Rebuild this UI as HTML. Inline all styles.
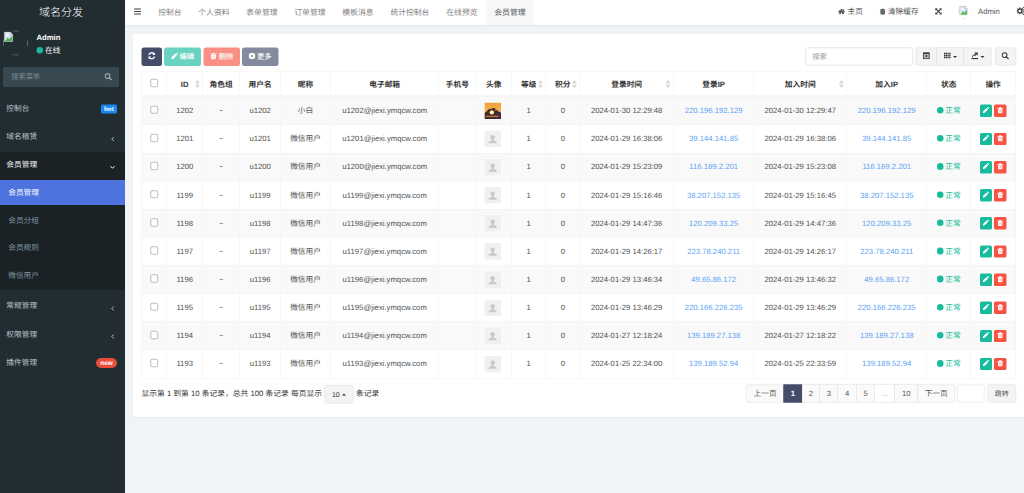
<!DOCTYPE html><html><head><meta charset="utf-8"><title>域名分发</title><style>
*{box-sizing:border-box;margin:0;padding:0}
html,body{width:1024px;height:493px;overflow:hidden;background:#f1f4f6}
body{font-family:"Liberation Sans","Noto Sans CJK SC",sans-serif;color:#333}
#app{text-rendering:geometricPrecision;position:absolute;left:0;top:0;width:2048px;height:986px;transform:scale(.5);transform-origin:0 0;font-size:15.4px;line-height:1.42857;overflow:hidden;background:#f1f4f6}
svg.ic{width:1em;height:1em;vertical-align:-.125em;display:inline-block}
.side{position:absolute;left:0;top:0;width:250px;height:986px;background:#222d32;color:#b8c7ce}
.logo{position:absolute;left:0;top:0;width:250px;height:50px;line-height:50px;text-align:center;color:#fff;font-size:22px;font-weight:300;padding-right:6px}
.uimg{position:absolute;left:6px;top:61px;width:50px;height:50px}
.uimg .ring{position:absolute;left:0;top:0;width:50px;height:50px}
.uimg .brk{position:absolute;left:1px;top:2px;width:20px;height:21px}
.uname{position:absolute;left:73px;top:64px;font-weight:bold;color:#fff;font-size:15.4px;line-height:22px}
.ustat{position:absolute;left:73px;top:91px;color:#fff;font-size:15.4px;line-height:22px}
.ustat i{display:inline-block;width:13px;height:13px;border-radius:50%;background:#18bc9c;margin-right:4px;vertical-align:-1px}
.sform{position:absolute;left:6px;top:134px;width:232px;height:40px;background:#374850;border-radius:4px;color:#7b8d96;font-size:14.4px;line-height:39px;padding-left:16.500px}
.sform svg{position:absolute;right:14px;top:12px;width:15px;height:15px;color:#a9b4ba}
.dark{position:absolute;left:0;top:304px;width:250px;height:276px;background:#1a2226}
.blue{position:absolute;left:0;top:359.600px;width:250px;height:50.200px;background:#4e73df}
.mi{position:absolute;left:12.600px;height:30px;line-height:30px;font-size:15.4px;color:#b8c7ce;white-space:nowrap}
.mi.s{left:16.400px;color:#7f97a2}
.mi.w{color:#fff}
.chev{position:absolute;left:221.500px;width:7px;height:10px}
.badge{position:absolute;height:17.500px;line-height:17px;font-size:12.500px;font-weight:bold;color:#fff;border-radius:3px;background:#1688f1;text-align:center}
.badge.new{background:#e74c3c;border-radius:10px;height:20px;line-height:18.500px;font-size:13px}
.head{position:absolute;left:250px;top:0;width:1798px;height:50px;background:#fff;box-shadow:0 2px 4px rgba(0,0,0,.06)}
.burger{position:absolute;left:18px;top:17px;width:14px;height:13px}
.burger i{display:block;height:2.400px;background:#3c3c3c;margin-bottom:2.600px;border-radius:1px}
.tabs{position:absolute;left:49.800px;top:0;height:50px;display:flex}
.tabs span{display:block;height:50px;line-height:49.600px;text-align:center;color:#828282;font-size:15.6px}
.tabs span.on{background:#f7f7f7;color:#555}
.rnav{position:absolute;top:0;height:50px;line-height:47px;color:#555;font-size:15.4px;white-space:nowrap}
.rnav svg.ic{color:#444}
.panel{position:absolute;left:266px;top:67.600px;width:1800px;height:766.400px;background:#fff;border-radius:4px;box-shadow:0 1px 2px rgba(0,0,0,.05)}
.btn{position:absolute;top:94.600px;height:37.200px;line-height:36.400px;border-radius:5px;color:#fff;font-size:14.600px;font-weight:500;text-align:center;white-space:nowrap}
.btn svg.ic{width:14px;height:14px;vertical-align:-2.600px;margin-right:3px}
.sinput{position:absolute;left:1611px;top:94.800px;width:215px;height:36px;border:1px solid #c9cde4;border-radius:4px;background:#fff;color:#999;font-size:14.400px;line-height:34px;padding-left:12.500px}
.tb{position:absolute;top:94.800px;height:36px;background:#f4f4f4;border:1px solid #ddd;color:#333;text-align:center;line-height:33px;font-size:15px}
.tb svg.ic{width:15px;height:15px;vertical-align:-2px}
.caret{display:inline-block;width:0;height:0;border-left:4px solid transparent;border-right:4px solid transparent;border-top:4.500px solid #333;vertical-align:1px;margin-left:4px}
table{position:absolute;left:283px;top:142.500px;border-collapse:separate;border-spacing:0;table-layout:fixed;width:1748.600px;font-size:15.4px}
th,td{border-top:1px solid #f1f1f1;border-left:1px solid #f1f1f1;text-align:center;vertical-align:middle;padding:0;white-space:nowrap;overflow:hidden;position:relative;color:#505050}
th{height:50.600px;border-bottom:2px solid #f0f0f0;font-weight:bold;color:#333;padding-top:4.600px}
td{height:56.280px}
tr>*:last-child{border-right:1px solid #f1f1f1}
tbody tr:last-child td{border-bottom:1px solid #f1f1f1;height:57.280px}
tbody tr:nth-child(odd) td{background:#f9f9f9}
a{color:#5b9ff5;text-decoration:none}
.cb{display:inline-block;width:15.600px;height:15.600px;border:1.200px solid #7d7d7d;border-radius:3px;background:#fff;vertical-align:middle;position:relative;top:-2px}
.sort{position:absolute;right:5.400px;top:50%;margin-top:-7px;width:9.700px;height:16.600px}
.av{width:33px;height:33.200px;display:block;margin:0 auto;position:relative;left:-1.600px}
.cj{position:relative;top:0}
th .cb{top:-3.600px}
.da{display:inline-block;transform:scale(1.7,1.2);color:#777}
.st{color:#18bc9c}
.st i{display:inline-block;width:13.400px;height:13.400px;border-radius:50%;background:#18bc9c;margin-right:3.400px;vertical-align:-1.500px}
.ab{display:inline-block;width:24.400px;height:24.600px;border-radius:3px;color:#fff;vertical-align:middle;line-height:23px}
.ab svg.ic{width:13px;height:13px;vertical-align:-1.500px}
.pinfo{position:absolute;top:770px;height:37px;line-height:36px;font-size:15.500px;color:#333;white-space:nowrap}
.psize{position:absolute;left:649.200px;top:770px;width:58px;height:37px;border:1px solid #ddd;border-radius:4px;background:#f4f4f4;text-align:center;line-height:34px;font-size:14px;color:#333}
.psize b{display:inline-block;width:0;height:0;border-left:4px solid transparent;border-right:4px solid transparent;border-bottom:4.500px solid #333;vertical-align:2px;margin-left:5px}
.pg{position:absolute;top:768.600px;height:36.600px;border:1px solid #ddd;margin-left:-1px;background:#fafafa;color:#555;text-align:center;line-height:34px;font-size:15.4px}
.pg.on{background:#444c69;border-color:#444c69;color:#fff;font-weight:bold}
.pg.dis{background:#fff;color:#aaa}
</style></head><body><div id="app">
<div class="side"><div class="logo">域名分发</div>
<div class="uimg"><svg class="ring" viewBox="0 0 50 50"><circle cx="25" cy="25" r="24.300" fill="none" stroke="#b4bcc0" stroke-opacity=".75" stroke-width="1.300" stroke-dasharray="12 26.170" stroke-dashoffset="6"/></svg><svg viewBox="0 0 18 19" class="brk"><path d="M1.500 1h10.500l4.500 4.500V18h-15z" fill="#fff" stroke="#a9b1bb" stroke-width="1.200"/><path d="M2.500 2h9l4 4v7h-13z" fill="#cfe0f7"/><ellipse cx="7" cy="6.500" rx="3.500" ry="2" fill="#fff"/><path d="M12 1v4.500h4.500" fill="#e8edf3" stroke="#a9b1bb" stroke-width="1.200"/><path d="M2.500 17l5-5.500 3 2.500 5-6V17z" fill="#4cae3c"/></svg></div><div class="uname">Admin</div><div class="ustat"><i></i>在线</div>
<div class="sform">搜索菜单<svg class="ic" viewBox="0 0 16 16"><circle cx="6.600" cy="6.600" r="5" fill="none" stroke="currentColor" stroke-width="2.200"/><path d="M10.400 10.400l4.300 4.300" stroke="currentColor" stroke-width="2.600" stroke-linecap="round"/></svg></div>
<div class="dark"></div><div class="blue"></div>
<div class="mi " style="top:202.6px">控制台</div>
<span class="badge" style="left:202px;width:31.500px;top:209px">hot</span>
<div class="mi " style="top:259.2px">域名租赁</div><svg class="chev" style="top:273.0px" viewBox="0 0 7 10"><path d="M5.500 1L1.500 5l4 4" fill="none" stroke="#b8c7ce" stroke-width="1.900"/></svg>
<div class="mi w" style="top:315.2px">会员管理</div><svg class="chev" style="top:331.0px;left:220px;width:10px;height:7px" viewBox="0 0 10 7"><path d="M1 1.500l4 4 4-4" fill="none" stroke="#fff" stroke-width="2"/></svg>
<div class="mi s w" style="top:370.9px">会员管理</div><div class="mi s" style="top:426.2px">会员分组</div><div class="mi s" style="top:481.4px">会员规则</div><div class="mi s" style="top:536.6px">微信用户</div>
<div class="mi " style="top:597.2px">常规管理</div><svg class="chev" style="top:611.6px" viewBox="0 0 7 10"><path d="M5.500 1L1.500 5l4 4" fill="none" stroke="#b8c7ce" stroke-width="1.900"/></svg>
<div class="mi " style="top:653.8px">权限管理</div><svg class="chev" style="top:668.2px" viewBox="0 0 7 10"><path d="M5.500 1L1.500 5l4 4" fill="none" stroke="#b8c7ce" stroke-width="1.900"/></svg>
<div class="mi " style="top:710.4px">插件管理</div>
<span class="badge new" style="left:192.400px;width:41.200px;top:716.200px">new</span>
</div>
<div class="head"><div class="burger"><i></i><i></i><i></i></div><div class="tabs">
<span style="width:80px">控制台</span>
<span style="width:96px">个人资料</span>
<span style="width:96px">表单管理</span>
<span style="width:96px">订单管理</span>
<span style="width:96px">模板消息</span>
<span style="width:112px">统计控制台</span>
<span style="width:96px">在线预览</span>
<span style="width:96px" class="on">会员管理</span>
</div>
<div class="rnav" style="left:1426px"><svg class="ic" style="width:14px;height:12px;vertical-align:-0.5px" viewBox="0 0 16 14"><path d="M8 .6L.2 7.200l1.100 1.300L8 2.900l6.700 5.600 1.100-1.300-2.600-2.200V1.400h-2v1.900zM2.600 8.400L8 3.900l5.400 4.500v5H9.500V9.600h-3v3.800H2.600z" fill="currentColor"/></svg><span style="margin-left:5px">主页</span></div>
<div class="rnav" style="left:1508.600px"><svg class="ic" style="width:12.6px;height:14px;vertical-align:-1.5px" viewBox="0 0 16 16"><path d="M1 2.800h4l.7-2h4.600l.7 2h4v2H1zM2.200 5.600h11.600l-.7 9.200a1.200 1.200 0 0 1-1.200 1.100H4.100a1.200 1.200 0 0 1-1.200-1.100zM5.600 7.600v5.800h.6V7.600zm2.100 0v5.800h.6V7.600zm2.100 0v5.800h.6V7.600z" fill="currentColor" fill-rule="evenodd"/></svg><span style="margin-left:4.500px">清除缓存</span></div>
<div class="rnav" style="left:1620px"><svg class="ic" style="width:13.6px;height:13.6px;vertical-align:-1.5px" viewBox="0 0 16 16"><path d="M.5.500h5.800L4.400 2.400 8 6l3.600-3.600L9.700.5h5.800v5.800l-1.900-1.900L10 8l3.600 3.600 1.900-1.900v5.800H9.700l1.900-1.900L8 10l-3.600 3.600 1.900 1.900H.5V9.700l1.900 1.900L6 8 2.400 4.400.5 6.300z" fill="currentColor"/></svg></div>
<svg style="position:absolute;left:1666.400px;top:11px;width:27px;height:27px" viewBox="0 0 27 27"><circle cx="13.500" cy="13.500" r="13" fill="none" stroke="#b5b5b5" stroke-opacity=".7" stroke-width="1" stroke-dasharray="7 13.420" stroke-dashoffset="3.500"/></svg>
<svg viewBox="0 0 18 19" style="position:absolute;left:1668px;top:11.500px;width:18px;height:19px"><path d="M1.500 1h10.500l4.500 4.500V18h-15z" fill="#fff" stroke="#a9b1bb" stroke-width="1.200"/><path d="M2.500 2h9l4 4v7h-13z" fill="#cfe0f7"/><ellipse cx="7" cy="6.500" rx="3.500" ry="2" fill="#fff"/><path d="M12 1v4.500h4.500" fill="#e8edf3" stroke="#a9b1bb" stroke-width="1.200"/><path d="M2.500 17l5-5.500 3 2.500 5-6V17z" fill="#4cae3c"/></svg>
<div class="rnav" style="left:1706px">Admin</div>
<div class="rnav" style="left:1783px"><svg class="ic" style="width:18px;height:18px;vertical-align:-3px" viewBox="0 0 16 16"><path d="M5.500 1.200l1.300.2.400 1.500 1.200.7 1.400-.6.900 1-.7 1.400.4 1.200 1.500.500v1.400l-1.500.5-.5 1.200.7 1.400-1 .9-1.300-.7-1.200.5-.5 1.500H5.200l-.5-1.500-1.200-.5-1.400.7-.9-1 .7-1.400-.5-1.200L0 8.500V7.100l1.400-.5.500-1.200-.7-1.400 1-.9 1.400.7 1.200-.6zM6 5.600a2.300 2.300 0 1 0 0 4.600 2.300 2.300 0 0 0 0-4.600z" fill="currentColor" fill-rule="evenodd"/><circle cx="13.500" cy="4" r="2.600" fill="none" stroke="currentColor" stroke-width="1.600"/><circle cx="13.500" cy="12" r="2.600" fill="none" stroke="currentColor" stroke-width="1.600"/></svg></div>
</div>
<div class="panel"></div>
<div class="btn" style="left:283px;width:41px;background:#444c69"><svg class="ic" style="margin:0;width:15px;height:15px;vertical-align:-2px" viewBox="0 0 16 16"><path d="M15 .8v5.700H9.300l2.100-2.100A4.700 4.700 0 0 0 3.500 6.500H.6A7.500 7.500 0 0 1 13.400 2.400zM1 15.200V9.500h5.700l-2.100 2.100a4.700 4.700 0 0 0 7.900-2.100h2.900A7.500 7.500 0 0 1 2.600 13.600z" fill="currentColor"/></svg></div>
<div class="btn" style="left:328px;width:74px;background:#69d3bf"><svg class="ic" viewBox="0 0 16 16"><path d="M.8 15.200l.9-4.600 8.300-8.300 3.700 3.700-8.300 8.300zM11.100 1.200l.9-.9a1.400 1.400 0 0 1 2 0l1.700 1.700a1.400 1.400 0 0 1 0 2l-.9.900z" fill="currentColor"/></svg>编辑</div>
<div class="btn" style="left:407px;width:73px;background:#fa9085"><svg class="ic" viewBox="0 0 16 16"><path d="M1 2.800h4l.7-2h4.600l.7 2h4v2H1zM2.200 5.600h11.600l-.7 9.200a1.200 1.200 0 0 1-1.200 1.100H4.100a1.200 1.200 0 0 1-1.200-1.100zM5.600 7.600v5.800h.6V7.600zm2.100 0v5.800h.6V7.600zm2.100 0v5.800h.6V7.600z" fill="currentColor" fill-rule="evenodd"/></svg>删除</div>
<div class="btn" style="left:483.500px;width:73.500px;background:#858b9e"><svg class="ic" viewBox="0 0 16 16"><path d="M8 .5a7.500 7.500 0 1 0 0 15A7.500 7.500 0 0 0 8 .5zm0 5a2.500 2.500 0 1 1 0 5 2.500 2.500 0 0 1 0-5z" fill="currentColor" fill-rule="evenodd"/></svg>更多</div>
<div class="sinput">搜索</div>
<div class="tb" style="left:1830.800px;width:43.500px;border-radius:4px 0 0 4px"><svg class="ic" viewBox="0 0 16 16"><rect x="1.800" y="1.800" width="12.400" height="12.400" fill="#bdbdbd" stroke="currentColor" stroke-width="1.800"/><rect x="1.800" y="1.800" width="12.400" height="2.400" fill="currentColor"/><rect x="6.500" y="6.500" width="3.500" height="4" fill="currentColor"/></svg></div>
<div class="tb" style="left:1873.300px;width:54.900px"><svg class="ic" viewBox="0 0 16 16"><path d="M1 1.500h2.800v3.400H1zm3.700 0h2.800v3.400H4.700zm3.700 0h2.800v3.400H8.400zm3.700 0H15v3.400h-2.900zM1 5.800h2.800v3.400H1zm3.700 0h2.800v3.400H4.700zm3.700 0h2.800v3.400H8.400zm3.700 0H15v3.400h-2.900zM1 10.100h2.800v3.400H1zm3.700 0h2.800v3.400H4.700zm3.700 0h2.800v3.400H8.400zm3.700 0H15v3.400h-2.900z" fill="currentColor"/></svg><span class="caret"></span></div>
<div class="tb" style="left:1927.200px;width:56px;border-radius:0 4px 4px 0"><svg class="ic" viewBox="0 0 16 16"><path d="M1 12.800h14v2.400H1z" fill="currentColor"/><path d="M2.500 11L5 6.500h3.200" fill="none" stroke="currentColor" stroke-width="2"/><path d="M7 .8h7.200V8l-2.500-2.500-3 3-2.200-2.200 3-3z" fill="currentColor"/></svg><span class="caret"></span></div>
<div class="tb" style="left:1989.800px;width:41.800px;border-radius:4px"><svg class="ic" viewBox="0 0 16 16"><circle cx="6.600" cy="6.600" r="5" fill="none" stroke="currentColor" stroke-width="2.200"/><path d="M10.400 10.400l4.300 4.300" stroke="currentColor" stroke-width="2.600" stroke-linecap="round"/></svg></div>
<table><colgroup><col style="width:50.2px"><col style="width:71.4px"><col style="width:74.2px"><col style="width:81.8px"><col style="width:100.0px"><col style="width:216.6px"><col style="width:74.2px"><col style="width:71.4px"><col style="width:68.4px"><col style="width:68.0px"><col style="width:187.4px"><col style="width:160.6px"><col style="width:185.8px"><col style="width:160px"><col style="width:88px"><col style="width:90.6px"></colgroup><thead><tr>
<th><span class="cb"></span></th>
<th>ID<svg class="sort" viewBox="0 0 10 17"><path d="M5 0l5 7.300H0z" fill="#d6d6d6"/><path d="M5 17L0 9.700h10z" fill="#d6d6d6"/></svg></th>
<th>角色组</th>
<th>用户名</th>
<th>昵称</th>
<th>电子邮箱</th>
<th>手机号</th>
<th>头像</th>
<th>等级<svg class="sort" viewBox="0 0 10 17"><path d="M5 0l5 7.300H0z" fill="#d6d6d6"/><path d="M5 17L0 9.700h10z" fill="#d6d6d6"/></svg></th>
<th>积分<svg class="sort" viewBox="0 0 10 17"><path d="M5 0l5 7.300H0z" fill="#d6d6d6"/><path d="M5 17L0 9.700h10z" fill="#d6d6d6"/></svg></th>
<th>登录时间<svg class="sort" viewBox="0 0 10 17"><path d="M5 0l5 7.300H0z" fill="#d6d6d6"/><path d="M5 17L0 9.700h10z" fill="#d6d6d6"/></svg></th>
<th>登录IP</th>
<th>加入时间<svg class="sort" viewBox="0 0 10 17"><path d="M5 0l5 7.300H0z" fill="#d6d6d6"/><path d="M5 17L0 9.700h10z" fill="#d6d6d6"/></svg></th>
<th>加入IP</th>
<th>状态</th>
<th>操作</th>
</tr></thead><tbody>
<tr><td><span class="cb"></span></td><td>1202</td><td><span class="da">-</span></td><td>u1202</td><td><span class="cj">小白</span></td><td>u1202@jiexi.ymqcw.com</td><td></td><td><svg class="av" viewBox="0 0 33 33"><defs><linearGradient id="sky" x1="0" y1="0" x2="0" y2="1"><stop offset="0" stop-color="#efa033"/><stop offset=".45" stop-color="#f5b24a"/><stop offset=".65" stop-color="#ea983a"/><stop offset="1" stop-color="#d9772a"/></linearGradient><radialGradient id="sun" cx=".5" cy=".5" r=".5"><stop offset="0" stop-color="#ffffff"/><stop offset=".45" stop-color="#fff0a0"/><stop offset=".8" stop-color="#fdc94c"/><stop offset="1" stop-color="#f0a030" stop-opacity="0"/></radialGradient></defs><rect width="33" height="33" fill="url(#sky)"/><path d="M0 21l4-3 4.500-4.500 2.200-.9 2.300.9 2-1.500 3.400-1.800 2.100 1.300L23 14l5 4 5 2.500V33H0z" fill="#3b2b3a"/><ellipse cx="14.500" cy="19.800" rx="5.200" ry="4.800" fill="url(#sun)"/><circle cx="21.400" cy="15" r="1.700" fill="#dd4f2c"/><rect x="2" y="26.200" width="26.500" height="2.900" fill="#c9742e" opacity=".92"/></svg></td><td>1</td><td>0</td><td>2024-01-30 12:29:48</td><td><a>220.196.192.129</a></td><td>2024-01-30 12:29:47</td><td><a>220.196.192.129</a></td><td class="st"><i></i>正常</td><td><span class="ab" style="background:#18bc9c;margin-right:4.400px"><svg class="ic" viewBox="0 0 16 16"><path d="M.8 15.200l.9-4.600 8.300-8.300 3.700 3.700-8.300 8.300zM11.100 1.200l.9-.9a1.400 1.400 0 0 1 2 0l1.700 1.700a1.400 1.400 0 0 1 0 2l-.9.900z" fill="currentColor"/></svg></span><span class="ab" style="background:#f75444"><svg class="ic" viewBox="0 0 16 16"><path d="M1 2.800h4l.7-2h4.600l.7 2h4v2H1zM2.200 5.600h11.600l-.7 9.200a1.200 1.200 0 0 1-1.200 1.100H4.100a1.200 1.200 0 0 1-1.200-1.100zM5.600 7.600v5.800h.6V7.600zm2.100 0v5.800h.6V7.600zm2.100 0v5.800h.6V7.600z" fill="currentColor" fill-rule="evenodd"/></svg></span></td></tr>
<tr><td><span class="cb"></span></td><td>1201</td><td><span class="da">-</span></td><td>u1201</td><td><span class="cj">微信用户</span></td><td>u1201@jiexi.ymqcw.com</td><td></td><td><svg class="av" viewBox="0 0 33 33"><rect width="33" height="33" fill="#f0f0f0"/><circle cx="16.300" cy="13.200" r="4.400" fill="#c9c9c9"/><path d="M14.300 15h4v6h-4z" fill="#c9c9c9"/><path d="M8 25.300c0-3 2-4.500 6-5.400h4.600c4 .9 6 2.400 6 5.400z" fill="#c9c9c9"/></svg></td><td>1</td><td>0</td><td>2024-01-29 16:38:06</td><td><a>39.144.141.85</a></td><td>2024-01-29 16:38:06</td><td><a>39.144.141.85</a></td><td class="st"><i></i>正常</td><td><span class="ab" style="background:#18bc9c;margin-right:4.400px"><svg class="ic" viewBox="0 0 16 16"><path d="M.8 15.200l.9-4.600 8.300-8.300 3.700 3.700-8.300 8.300zM11.100 1.200l.9-.9a1.400 1.400 0 0 1 2 0l1.700 1.700a1.400 1.400 0 0 1 0 2l-.9.900z" fill="currentColor"/></svg></span><span class="ab" style="background:#f75444"><svg class="ic" viewBox="0 0 16 16"><path d="M1 2.800h4l.7-2h4.600l.7 2h4v2H1zM2.200 5.600h11.600l-.7 9.200a1.200 1.200 0 0 1-1.200 1.100H4.100a1.200 1.200 0 0 1-1.200-1.100zM5.600 7.600v5.800h.6V7.600zm2.100 0v5.800h.6V7.600zm2.100 0v5.800h.6V7.600z" fill="currentColor" fill-rule="evenodd"/></svg></span></td></tr>
<tr><td><span class="cb"></span></td><td>1200</td><td><span class="da">-</span></td><td>u1200</td><td><span class="cj">微信用户</span></td><td>u1200@jiexi.ymqcw.com</td><td></td><td><svg class="av" viewBox="0 0 33 33"><rect width="33" height="33" fill="#f0f0f0"/><circle cx="16.300" cy="13.200" r="4.400" fill="#c9c9c9"/><path d="M14.300 15h4v6h-4z" fill="#c9c9c9"/><path d="M8 25.300c0-3 2-4.500 6-5.400h4.600c4 .9 6 2.400 6 5.400z" fill="#c9c9c9"/></svg></td><td>1</td><td>0</td><td>2024-01-29 15:23:09</td><td><a>116.169.2.201</a></td><td>2024-01-29 15:23:08</td><td><a>116.169.2.201</a></td><td class="st"><i></i>正常</td><td><span class="ab" style="background:#18bc9c;margin-right:4.400px"><svg class="ic" viewBox="0 0 16 16"><path d="M.8 15.200l.9-4.600 8.300-8.300 3.700 3.700-8.300 8.300zM11.100 1.200l.9-.9a1.400 1.400 0 0 1 2 0l1.700 1.700a1.400 1.400 0 0 1 0 2l-.9.900z" fill="currentColor"/></svg></span><span class="ab" style="background:#f75444"><svg class="ic" viewBox="0 0 16 16"><path d="M1 2.800h4l.7-2h4.600l.7 2h4v2H1zM2.200 5.600h11.600l-.7 9.200a1.200 1.200 0 0 1-1.200 1.100H4.100a1.200 1.200 0 0 1-1.200-1.100zM5.600 7.600v5.800h.6V7.600zm2.100 0v5.800h.6V7.600zm2.100 0v5.800h.6V7.600z" fill="currentColor" fill-rule="evenodd"/></svg></span></td></tr>
<tr><td><span class="cb"></span></td><td>1199</td><td><span class="da">-</span></td><td>u1199</td><td><span class="cj">微信用户</span></td><td>u1199@jiexi.ymqcw.com</td><td></td><td><svg class="av" viewBox="0 0 33 33"><rect width="33" height="33" fill="#f0f0f0"/><circle cx="16.300" cy="13.200" r="4.400" fill="#c9c9c9"/><path d="M14.300 15h4v6h-4z" fill="#c9c9c9"/><path d="M8 25.300c0-3 2-4.500 6-5.400h4.600c4 .9 6 2.400 6 5.400z" fill="#c9c9c9"/></svg></td><td>1</td><td>0</td><td>2024-01-29 15:16:46</td><td><a>38.207.152.135</a></td><td>2024-01-29 15:16:45</td><td><a>38.207.152.135</a></td><td class="st"><i></i>正常</td><td><span class="ab" style="background:#18bc9c;margin-right:4.400px"><svg class="ic" viewBox="0 0 16 16"><path d="M.8 15.200l.9-4.600 8.300-8.300 3.700 3.700-8.300 8.300zM11.100 1.200l.9-.9a1.400 1.400 0 0 1 2 0l1.700 1.700a1.400 1.400 0 0 1 0 2l-.9.900z" fill="currentColor"/></svg></span><span class="ab" style="background:#f75444"><svg class="ic" viewBox="0 0 16 16"><path d="M1 2.800h4l.7-2h4.600l.7 2h4v2H1zM2.200 5.600h11.600l-.7 9.200a1.200 1.200 0 0 1-1.200 1.100H4.100a1.200 1.200 0 0 1-1.200-1.100zM5.600 7.600v5.800h.6V7.600zm2.100 0v5.800h.6V7.600zm2.100 0v5.800h.6V7.600z" fill="currentColor" fill-rule="evenodd"/></svg></span></td></tr>
<tr><td><span class="cb"></span></td><td>1198</td><td><span class="da">-</span></td><td>u1198</td><td><span class="cj">微信用户</span></td><td>u1198@jiexi.ymqcw.com</td><td></td><td><svg class="av" viewBox="0 0 33 33"><rect width="33" height="33" fill="#f0f0f0"/><circle cx="16.300" cy="13.200" r="4.400" fill="#c9c9c9"/><path d="M14.300 15h4v6h-4z" fill="#c9c9c9"/><path d="M8 25.300c0-3 2-4.500 6-5.400h4.600c4 .9 6 2.400 6 5.400z" fill="#c9c9c9"/></svg></td><td>1</td><td>0</td><td>2024-01-29 14:47:36</td><td><a>120.209.33.25</a></td><td>2024-01-29 14:47:36</td><td><a>120.209.33.25</a></td><td class="st"><i></i>正常</td><td><span class="ab" style="background:#18bc9c;margin-right:4.400px"><svg class="ic" viewBox="0 0 16 16"><path d="M.8 15.200l.9-4.600 8.300-8.300 3.700 3.700-8.300 8.300zM11.100 1.200l.9-.9a1.400 1.400 0 0 1 2 0l1.700 1.700a1.400 1.400 0 0 1 0 2l-.9.900z" fill="currentColor"/></svg></span><span class="ab" style="background:#f75444"><svg class="ic" viewBox="0 0 16 16"><path d="M1 2.800h4l.7-2h4.600l.7 2h4v2H1zM2.200 5.600h11.600l-.7 9.200a1.200 1.200 0 0 1-1.200 1.100H4.100a1.200 1.200 0 0 1-1.200-1.100zM5.600 7.600v5.800h.6V7.600zm2.100 0v5.800h.6V7.600zm2.100 0v5.800h.6V7.600z" fill="currentColor" fill-rule="evenodd"/></svg></span></td></tr>
<tr><td><span class="cb"></span></td><td>1197</td><td><span class="da">-</span></td><td>u1197</td><td><span class="cj">微信用户</span></td><td>u1197@jiexi.ymqcw.com</td><td></td><td><svg class="av" viewBox="0 0 33 33"><rect width="33" height="33" fill="#f0f0f0"/><circle cx="16.300" cy="13.200" r="4.400" fill="#c9c9c9"/><path d="M14.300 15h4v6h-4z" fill="#c9c9c9"/><path d="M8 25.300c0-3 2-4.500 6-5.400h4.600c4 .9 6 2.400 6 5.400z" fill="#c9c9c9"/></svg></td><td>1</td><td>0</td><td>2024-01-29 14:26:17</td><td><a>223.78.240.211</a></td><td>2024-01-29 14:26:17</td><td><a>223.78.240.211</a></td><td class="st"><i></i>正常</td><td><span class="ab" style="background:#18bc9c;margin-right:4.400px"><svg class="ic" viewBox="0 0 16 16"><path d="M.8 15.200l.9-4.600 8.300-8.300 3.700 3.700-8.300 8.300zM11.100 1.200l.9-.9a1.400 1.400 0 0 1 2 0l1.700 1.700a1.400 1.400 0 0 1 0 2l-.9.900z" fill="currentColor"/></svg></span><span class="ab" style="background:#f75444"><svg class="ic" viewBox="0 0 16 16"><path d="M1 2.800h4l.7-2h4.600l.7 2h4v2H1zM2.200 5.600h11.600l-.7 9.200a1.200 1.200 0 0 1-1.200 1.100H4.100a1.200 1.200 0 0 1-1.200-1.100zM5.600 7.600v5.800h.6V7.600zm2.100 0v5.800h.6V7.600zm2.100 0v5.800h.6V7.600z" fill="currentColor" fill-rule="evenodd"/></svg></span></td></tr>
<tr><td><span class="cb"></span></td><td>1196</td><td><span class="da">-</span></td><td>u1196</td><td><span class="cj">微信用户</span></td><td>u1196@jiexi.ymqcw.com</td><td></td><td><svg class="av" viewBox="0 0 33 33"><rect width="33" height="33" fill="#f0f0f0"/><circle cx="16.300" cy="13.200" r="4.400" fill="#c9c9c9"/><path d="M14.300 15h4v6h-4z" fill="#c9c9c9"/><path d="M8 25.300c0-3 2-4.500 6-5.400h4.600c4 .9 6 2.400 6 5.400z" fill="#c9c9c9"/></svg></td><td>1</td><td>0</td><td>2024-01-29 13:46:34</td><td><a>49.65.86.172</a></td><td>2024-01-29 13:46:32</td><td><a>49.65.86.172</a></td><td class="st"><i></i>正常</td><td><span class="ab" style="background:#18bc9c;margin-right:4.400px"><svg class="ic" viewBox="0 0 16 16"><path d="M.8 15.200l.9-4.600 8.300-8.300 3.700 3.700-8.300 8.300zM11.100 1.200l.9-.9a1.400 1.400 0 0 1 2 0l1.700 1.700a1.400 1.400 0 0 1 0 2l-.9.900z" fill="currentColor"/></svg></span><span class="ab" style="background:#f75444"><svg class="ic" viewBox="0 0 16 16"><path d="M1 2.800h4l.7-2h4.600l.7 2h4v2H1zM2.200 5.600h11.600l-.7 9.200a1.200 1.200 0 0 1-1.200 1.100H4.100a1.200 1.200 0 0 1-1.200-1.100zM5.600 7.600v5.800h.6V7.600zm2.100 0v5.800h.6V7.600zm2.100 0v5.800h.6V7.600z" fill="currentColor" fill-rule="evenodd"/></svg></span></td></tr>
<tr><td><span class="cb"></span></td><td>1195</td><td><span class="da">-</span></td><td>u1195</td><td><span class="cj">微信用户</span></td><td>u1195@jiexi.ymqcw.com</td><td></td><td><svg class="av" viewBox="0 0 33 33"><rect width="33" height="33" fill="#f0f0f0"/><circle cx="16.300" cy="13.200" r="4.400" fill="#c9c9c9"/><path d="M14.300 15h4v6h-4z" fill="#c9c9c9"/><path d="M8 25.300c0-3 2-4.500 6-5.400h4.600c4 .9 6 2.400 6 5.400z" fill="#c9c9c9"/></svg></td><td>1</td><td>0</td><td>2024-01-29 13:46:29</td><td><a>220.166.226.235</a></td><td>2024-01-29 13:46:29</td><td><a>220.166.226.235</a></td><td class="st"><i></i>正常</td><td><span class="ab" style="background:#18bc9c;margin-right:4.400px"><svg class="ic" viewBox="0 0 16 16"><path d="M.8 15.200l.9-4.600 8.300-8.300 3.700 3.700-8.300 8.300zM11.100 1.200l.9-.9a1.400 1.400 0 0 1 2 0l1.700 1.700a1.400 1.400 0 0 1 0 2l-.9.900z" fill="currentColor"/></svg></span><span class="ab" style="background:#f75444"><svg class="ic" viewBox="0 0 16 16"><path d="M1 2.800h4l.7-2h4.600l.7 2h4v2H1zM2.200 5.600h11.600l-.7 9.200a1.200 1.200 0 0 1-1.200 1.100H4.100a1.200 1.200 0 0 1-1.200-1.100zM5.600 7.600v5.800h.6V7.600zm2.100 0v5.800h.6V7.600zm2.100 0v5.800h.6V7.600z" fill="currentColor" fill-rule="evenodd"/></svg></span></td></tr>
<tr><td><span class="cb"></span></td><td>1194</td><td><span class="da">-</span></td><td>u1194</td><td><span class="cj">微信用户</span></td><td>u1194@jiexi.ymqcw.com</td><td></td><td><svg class="av" viewBox="0 0 33 33"><rect width="33" height="33" fill="#f0f0f0"/><circle cx="16.300" cy="13.200" r="4.400" fill="#c9c9c9"/><path d="M14.300 15h4v6h-4z" fill="#c9c9c9"/><path d="M8 25.300c0-3 2-4.500 6-5.400h4.600c4 .9 6 2.400 6 5.400z" fill="#c9c9c9"/></svg></td><td>1</td><td>0</td><td>2024-01-27 12:18:24</td><td><a>139.189.27.138</a></td><td>2024-01-27 12:18:22</td><td><a>139.189.27.138</a></td><td class="st"><i></i>正常</td><td><span class="ab" style="background:#18bc9c;margin-right:4.400px"><svg class="ic" viewBox="0 0 16 16"><path d="M.8 15.200l.9-4.600 8.300-8.300 3.700 3.700-8.300 8.300zM11.100 1.200l.9-.9a1.400 1.400 0 0 1 2 0l1.700 1.700a1.400 1.400 0 0 1 0 2l-.9.900z" fill="currentColor"/></svg></span><span class="ab" style="background:#f75444"><svg class="ic" viewBox="0 0 16 16"><path d="M1 2.800h4l.7-2h4.600l.7 2h4v2H1zM2.200 5.600h11.600l-.7 9.200a1.200 1.200 0 0 1-1.200 1.100H4.100a1.200 1.200 0 0 1-1.200-1.100zM5.600 7.600v5.800h.6V7.600zm2.100 0v5.800h.6V7.600zm2.100 0v5.800h.6V7.600z" fill="currentColor" fill-rule="evenodd"/></svg></span></td></tr>
<tr><td><span class="cb"></span></td><td>1193</td><td><span class="da">-</span></td><td>u1193</td><td><span class="cj">微信用户</span></td><td>u1193@jiexi.ymqcw.com</td><td></td><td><svg class="av" viewBox="0 0 33 33"><rect width="33" height="33" fill="#f0f0f0"/><circle cx="16.300" cy="13.200" r="4.400" fill="#c9c9c9"/><path d="M14.300 15h4v6h-4z" fill="#c9c9c9"/><path d="M8 25.300c0-3 2-4.500 6-5.400h4.600c4 .9 6 2.400 6 5.400z" fill="#c9c9c9"/></svg></td><td>1</td><td>0</td><td>2024-01-25 22:34:00</td><td><a>139.189.52.94</a></td><td>2024-01-25 22:33:59</td><td><a>139.189.52.94</a></td><td class="st"><i></i>正常</td><td><span class="ab" style="background:#18bc9c;margin-right:4.400px"><svg class="ic" viewBox="0 0 16 16"><path d="M.8 15.200l.9-4.600 8.300-8.300 3.700 3.700-8.300 8.300zM11.100 1.200l.9-.9a1.400 1.400 0 0 1 2 0l1.700 1.700a1.400 1.400 0 0 1 0 2l-.9.900z" fill="currentColor"/></svg></span><span class="ab" style="background:#f75444"><svg class="ic" viewBox="0 0 16 16"><path d="M1 2.800h4l.7-2h4.600l.7 2h4v2H1zM2.200 5.600h11.600l-.7 9.200a1.200 1.200 0 0 1-1.200 1.100H4.100a1.200 1.200 0 0 1-1.200-1.100zM5.600 7.600v5.800h.6V7.600zm2.100 0v5.800h.6V7.600zm2.100 0v5.800h.6V7.600z" fill="currentColor" fill-rule="evenodd"/></svg></span></td></tr>
</tbody></table>
<div class="pinfo" style="left:283px">显示第 1 到第 10 条记录，总共 100 条记录 每页显示</div><div class="psize">10<b></b></div><div class="pinfo" style="left:712px">条记录</div>
<div class="pg " style="left:1493.2px;width:75.8px;border-radius:4px 0 0 4px">上一页</div>
<div class="pg on" style="left:1568.0px;width:37.6px">1</div>
<div class="pg " style="left:1604.6px;width:36.6px">2</div>
<div class="pg " style="left:1640.2px;width:37.0px">3</div>
<div class="pg " style="left:1676.2px;width:38.2px">4</div>
<div class="pg " style="left:1713.4px;width:37.6px">5</div>
<div class="pg dis" style="left:1750.0px;width:41.0px">...</div>
<div class="pg " style="left:1790.0px;width:47.0px">10</div>
<div class="pg " style="left:1836.0px;width:74.8px;border-radius:0 4px 4px 0">下一页</div>
<div class="pg" style="left:1914.2px;width:55.0px;background:#fff;border-radius:4px;margin:0"></div>
<div class="pg" style="left:1974.8px;width:57.0px;background:#f4f4f4;border-radius:4px;margin:0;font-size:14px">跳转</div>
</div></body></html>
